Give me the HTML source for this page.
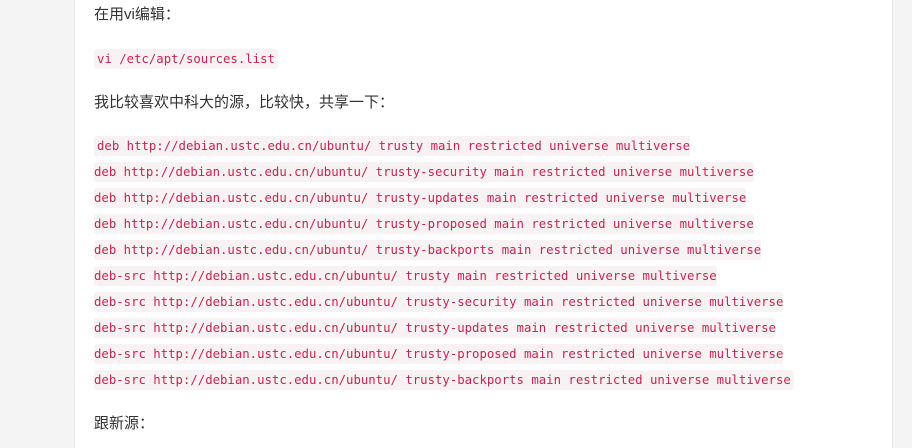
<!DOCTYPE html>
<html><head><meta charset="utf-8"><style>
body{margin:0;width:912px;height:448px;background:#f4f4f4;overflow:hidden;position:relative}
.panel{position:absolute;left:74px;top:0;width:817px;height:448px;background:#fff;border-left:1px solid #e6e6e6;border-right:1px solid #e6e6e6}
.t{position:absolute;left:94px;font:15px "Liberation Sans","Noto Sans CJK SC",sans-serif;color:#333;line-height:20px}
.c{position:absolute;font:12.32px "DejaVu Sans Mono","Liberation Mono",monospace;color:#c7254e;background:#f9f2f4;line-height:20px;height:20px;white-space:pre;border-radius:3px}
</style></head><body>
<div class="panel"></div>
<div class="t" style="top:5px">在用vi编辑：</div>
<div class="c" style="left:94px;top:49px;padding:0 3px">vi /etc/apt/sources.list</div>
<div class="t" style="top:93px">我比较喜欢中科大的源，比较快，共享一下：</div>
<div class="c" style="left:94px;top:136px;padding:0 0 0 3px;border-radius:3px 0 0 0">deb http://debian.ustc.edu.cn/ubuntu/ trusty main restricted universe multiverse</div>
<div class="c" style="left:94px;top:162px">deb http://debian.ustc.edu.cn/ubuntu/ trusty-security main restricted universe multiverse</div>
<div class="c" style="left:94px;top:188px">deb http://debian.ustc.edu.cn/ubuntu/ trusty-updates main restricted universe multiverse</div>
<div class="c" style="left:94px;top:214px">deb http://debian.ustc.edu.cn/ubuntu/ trusty-proposed main restricted universe multiverse</div>
<div class="c" style="left:94px;top:240px">deb http://debian.ustc.edu.cn/ubuntu/ trusty-backports main restricted universe multiverse</div>
<div class="c" style="left:94px;top:266px">deb-src http://debian.ustc.edu.cn/ubuntu/ trusty main restricted universe multiverse</div>
<div class="c" style="left:94px;top:292px">deb-src http://debian.ustc.edu.cn/ubuntu/ trusty-security main restricted universe multiverse</div>
<div class="c" style="left:94px;top:318px">deb-src http://debian.ustc.edu.cn/ubuntu/ trusty-updates main restricted universe multiverse</div>
<div class="c" style="left:94px;top:344px">deb-src http://debian.ustc.edu.cn/ubuntu/ trusty-proposed main restricted universe multiverse</div>
<div class="c" style="left:94px;top:370px;padding-right:3px">deb-src http://debian.ustc.edu.cn/ubuntu/ trusty-backports main restricted universe multiverse</div>
<div class="t" style="top:414px">跟新源：</div>
</body></html>
